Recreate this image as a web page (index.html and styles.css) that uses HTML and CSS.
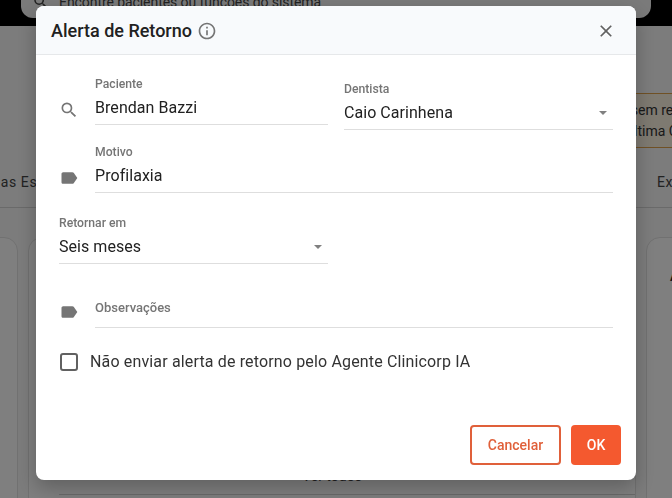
FILE: index.html
```html
<!DOCTYPE html>
<html lang="pt-BR">
<head>
    <meta charset="UTF-8">
    <meta name="viewport" content="width=device-width, initial-scale=1.0">
    <title>Alerta de Retorno</title>
    <link rel="stylesheet" href="styles.css">
</head>
<body>

<!-- page behind the dialog -->
<div class="page">
    <div class="topbar">
        <div class="search-box">
            <svg class="search-icon" width="18" height="18" viewBox="0 0 24 24"><path d="M15.5 14h-.79l-.28-.27A6.47 6.47 0 0 0 16 9.5 6.5 6.5 0 1 0 9.5 16c1.61 0 3.09-.59 4.23-1.57l.27.28v.79l5 4.99L20.49 19l-4.99-5zm-6 0C7.01 14 5 11.99 5 9.5S7.01 5 9.5 5 14 7.01 14 9.5 11.99 14 9.5 14z"/></svg>
            <span>Encontre pacientes ou funções do sistema</span>
        </div>
    </div>
    <div class="notice">
        <div class="notice-first">Paciente sem retorno</div>
        <div class="notice-second">Última Consulta</div>
    </div>
    <div class="tabs">
        <span class="tab-left">Últimas Estéticas</span>
        <span class="tab-right">Exames</span>
    </div>
    <div class="columns">
        <div class="panel panel-left"></div>
        <div class="panel panel-middle">
            <div class="see-all">Ver todos</div>
        </div>
        <div class="panel panel-right">Alertas</div>
    </div>
</div>
<div class="overlay"></div>

<!-- dialog -->
<div class="dialog">
    <div class="dialog-header">
        <div class="dialog-title">
            <h1>Alerta de Retorno</h1>
            <svg class="info-icon" width="20" height="20" viewBox="0 0 24 24"><path d="M11 7h2v2h-2zm0 4h2v6h-2zm1-9C6.48 2 2 6.48 2 12s4.48 10 10 10 10-4.48 10-10S17.52 2 12 2zm0 18c-4.41 0-8-3.59-8-8s3.59-8 8-8 8 3.59 8 8-3.59 8-8 8z"/></svg>
        </div>
        <svg class="close-icon" width="20" height="20" viewBox="0 0 24 24"><path d="M19 6.41 17.59 5 12 10.59 6.41 5 5 6.41 10.59 12 5 17.59 6.41 19 12 13.41 17.59 19 19 17.59 13.41 12z"/></svg>
    </div>

    <div class="dialog-body">
        <div class="row row-patient">
            <svg class="field-icon" width="20" height="20" viewBox="0 0 24 24"><path d="M15.5 14h-.79l-.28-.27A6.47 6.47 0 0 0 16 9.5 6.5 6.5 0 1 0 9.5 16c1.61 0 3.09-.59 4.23-1.57l.27.28v.79l5 4.99L20.49 19l-4.99-5zm-6 0C7.01 14 5 11.99 5 9.5S7.01 5 9.5 5 14 7.01 14 9.5 11.99 14 9.5 14z"/></svg>
            <div class="field field-half">
                <label>Paciente</label>
                <div class="value">Brendan Bazzi</div>
            </div>
            <div class="field field-dentist">
                <label>Dentista</label>
                <div class="value">Caio Carinhena<span class="caret"></span></div>
            </div>
        </div>

        <div class="row row-reason">
            <svg class="field-icon" width="20" height="20" viewBox="0 0 24 24"><path d="M17.63 5.84C17.27 5.33 16.67 5 16 5L5 5.01C3.9 5.01 3 5.9 3 7v10c0 1.1.9 1.99 2 1.99L16 19c.67 0 1.27-.33 1.63-.84L22 12l-4.37-6.16z"/></svg>
            <div class="field field-full">
                <label>Motivo</label>
                <div class="value">Profilaxia</div>
            </div>
        </div>

        <div class="field field-return">
            <label>Retornar em</label>
            <div class="value">Seis meses<span class="caret"></span></div>
        </div>

        <div class="row row-notes">
            <svg class="field-icon" width="20" height="20" viewBox="0 0 24 24"><path d="M17.63 5.84C17.27 5.33 16.67 5 16 5L5 5.01C3.9 5.01 3 5.9 3 7v10c0 1.1.9 1.99 2 1.99L16 19c.67 0 1.27-.33 1.63-.84L22 12l-4.37-6.16z"/></svg>
            <div class="field field-full notes">
                <label>Observações</label>
            </div>
        </div>

        <div class="check-row">
            <span class="checkbox"></span>
            <span>Não enviar alerta de retorno pelo Agente Clinicorp IA</span>
        </div>
    </div>

    <div class="dialog-footer">
        <button class="btn btn-outline">Cancelar</button>
        <button class="btn btn-primary">OK</button>
    </div>
</div>

</body>
</html>
```

FILE: styles.css
```css
html, body {
    margin: 0;
    padding: 0;
    height: 100%;
    overflow: hidden;
}

body {
    font-family: Roboto, 'Liberation Sans', sans-serif;
    color: #212121;
    background: #fff;
}

/* page behind */
.page {
    height: 498px;
    overflow: hidden;
    background: #f8f8f8;
}

.topbar {
    height: 26px;
    background: #000;
    padding: 0 21px;
}

.search-box {
    height: 18px;
    background: #f5f5f5;
    border-radius: 0 0 12px 12px;
    display: flex;
    align-items: flex-start;
    gap: 9px;
    padding-left: 11px;
    font-size: 14px;
    letter-spacing: -0.07px;
    line-height: 16px;
    color: #444;
    overflow: hidden;
    white-space: nowrap;
}

.search-icon {
    fill: #444;
    flex-shrink: 0;
    margin-top: -7px;
}

.search-box span {
    margin-top: -6px;
}

.notice {
    margin: 67px 0 0 540px;
    height: 55px;
    box-sizing: border-box;
    border-top: 1px solid #e0a24a;
    border-bottom: 1px solid #e0a24a;
    background: #fdf4e3;
    font-size: 14px;
    line-height: 21px;
    padding-top: 6px;
    white-space: nowrap;
    color: #333;
}

.notice-first {
    margin-left: 33px;
}

.notice-second {
    margin-left: 85px;
}

.tabs {
    display: flex;
    justify-content: space-between;
    height: 60px;
    box-sizing: border-box;
    border-bottom: 1px solid #d4d4d4;
    padding-top: 26px;
    font-size: 14px;
    letter-spacing: 0.6px;
    color: #444;
    white-space: nowrap;
}

.tab-left {
    margin-left: -35px;
}

.tab-right {
    margin-right: -38px;
}

.columns {
    display: flex;
    gap: 10px;
    margin: 29px -40px 0 -40px;
}

.panel {
    height: 300px;
    box-sizing: border-box;
    border: 1px solid #e2e2e2;
    border-radius: 14px;
    background: #fff;
    flex-shrink: 0;
}

.panel-left {
    width: 58px;
}

.panel-middle {
    width: 608px;
}

.panel-right {
    width: 120px;
    padding: 30px 0 0 23px;
    font-size: 14px;
    font-weight: 500;
    white-space: nowrap;
}

.see-all {
    margin: 228px 0 0 30px;
    height: 28px;
    padding-right: 30px;
    line-height: 20px;
    text-align: center;
    font-size: 14px;
    color: #444;
    border-bottom: 1px solid #d4d4d4;
}

.overlay {
    position: fixed;
    inset: 0;
    background: rgba(0, 0, 0, 0.5);
}

/* dialog */
.dialog {
    position: fixed;
    left: 36px;
    top: 6px;
    width: 600px;
    height: 474px;
    background: #fff;
    border-radius: 8px;
    overflow: hidden;
    display: flex;
    flex-direction: column;
    box-shadow: 0 8px 20px rgba(0, 0, 0, 0.25);
}

.dialog-header {
    height: 49px;
    flex-shrink: 0;
    box-sizing: border-box;
    background: #f8fafc;
    border-bottom: 1px solid #e6e8ea;
    display: flex;
    justify-content: space-between;
    align-items: center;
    padding: 1px 20px 0 15px;
}

.dialog-title {
    display: flex;
    align-items: center;
    gap: 5px;
}

h1 {
    font-size: 18px;
    font-weight: 500;
    margin: 0;
    color: #212121;
}

.info-icon {
    fill: #757575;
}

.close-icon {
    fill: #616161;
}

.dialog-body {
    flex: 1;
    padding: 0 23px;
    display: flex;
    flex-direction: column;
}

.row {
    display: flex;
}

.field-icon {
    fill: #757575;
    flex-shrink: 0;
    margin-right: 16px;
}

.row-patient {
    margin-top: 22px;
    align-items: flex-start;
}

.row-patient .field-icon {
    margin-top: 23px;
}

.row-reason {
    margin-top: 15px;
}

.row-reason .field-icon {
    margin-top: 23px;
}

.row-notes {
    margin-top: 37px;
}

.row-notes .field-icon {
    margin-top: 1px;
}

.field {
    box-sizing: border-box;
    border-bottom: 1px solid #dedede;
}

.field label {
    display: block;
    font-size: 12.2px;
    font-weight: 500;
    line-height: 14px;
    color: #757575;
}

.value {
    display: flex;
    justify-content: space-between;
    align-items: center;
    font-size: 16px;
    letter-spacing: 0.05px;
    line-height: 20px;
    margin-top: 7px;
    padding-bottom: 6px;
    color: #212121;
}

.field-half {
    width: 233px;
}

.field-dentist {
    width: 269px;
    margin: 5px 0 0 16px;
}

.field-full {
    width: 518px;
}

.field-return {
    width: 269px;
    margin-top: 23px;
}

.notes {
    height: 27px;
}

.notes label {
    font-size: 13px;
}

.caret {
    width: 0;
    height: 0;
    border-left: 4px solid transparent;
    border-right: 4px solid transparent;
    border-top: 4px solid #808080;
    margin-right: 6px;
}

.check-row {
    display: flex;
    align-items: center;
    gap: 12px;
    margin: 24px 0 0 1px;
    font-size: 16px;
    letter-spacing: 0.15px;
    color: #333;
}

.checkbox {
    width: 18px;
    height: 18px;
    box-sizing: border-box;
    border: 2px solid #616161;
    border-radius: 3px;
}

.dialog-footer {
    display: flex;
    justify-content: flex-end;
    gap: 10px;
    padding: 0 15px 15px 0;
}

.btn {
    height: 40px;
    border-radius: 4px;
    font-family: inherit;
    font-size: 14px;
    font-weight: 500;
}

.btn-outline {
    width: 91px;
    background: #fff;
    border: 2px solid #e0603a;
    color: #e0603a;
}

.btn-primary {
    width: 50px;
    background: #f4592f;
    border: none;
    color: #fff;
}
```
